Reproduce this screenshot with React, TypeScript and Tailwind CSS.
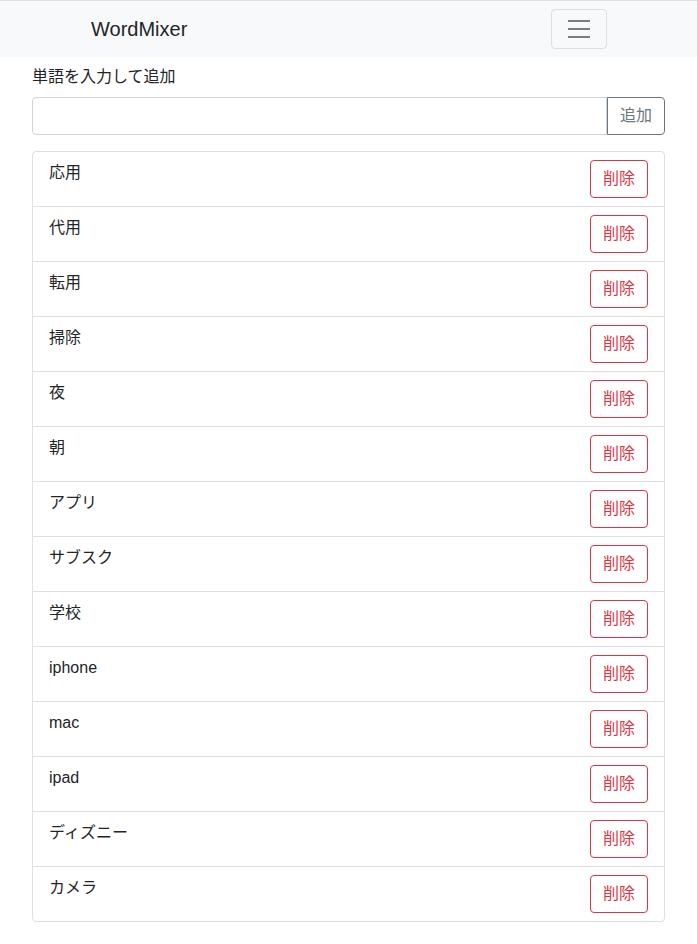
import { useState } from "react";

const initialWords = [
  "応用",
  "代用",
  "転用",
  "掃除",
  "夜",
  "朝",
  "アプリ",
  "サブスク",
  "学校",
  "iphone",
  "mac",
  "ipad",
  "ディズニー",
  "カメラ",
];

export default function App() {
  const [words, setWords] = useState(initialWords);
  const [text, setText] = useState("");

  const addWord = () => {
    if (!text.trim()) return;
    setWords([...words, text.trim()]);
    setText("");
  };

  const removeWord = (i: number) => {
    setWords(words.filter((_, idx) => idx !== i));
  };

  return (
    <div className="min-h-screen bg-white text-[#212529] font-['Liberation_Sans','Noto_Sans_CJK_JP',sans-serif] text-base leading-6">
      <nav className="border-t border-[#dee2e6] bg-[#f8f9fa]">
        <div className="flex items-center justify-between h-[56px] pl-[91px] pr-[90px]">
          <span className="text-[20px] leading-[30px]">WordMixer</span>
          <button className="w-[56px] h-[40px] flex items-center justify-center border border-[rgba(0,0,0,0.1)] rounded-[4px]">
            <svg width="30" height="30" viewBox="0 0 30 30">
              <path
                d="M4 7h22M4 15h22M4 23h22"
                stroke="rgba(0,0,0,0.5)"
                strokeWidth="2"
                strokeLinecap="butt"
              />
            </svg>
          </button>
        </div>
      </nav>

      <div className="px-[32px]">
        <label className="block mt-2 mb-2">単語を入力して追加</label>
        <div className="flex">
          <input
            value={text}
            onChange={(e) => setText(e.target.value)}
            className="flex-1 h-[38px] px-3 border border-[#ced4da] rounded-l-[4px] outline-none"
          />
          <button
            onClick={addWord}
            className="h-[38px] px-3 border border-[#6c757d] text-[#6c757d] rounded-r-[4px]"
          >
            追加
          </button>
        </div>

        <ul className="mt-4 border border-[rgba(0,0,0,0.125)] rounded-[4px]">
          {words.map((w, i) => (
            <li
              key={i}
              className={`flex items-start justify-between px-4 py-2 ${
                i > 0 ? "border-t border-[rgba(0,0,0,0.125)]" : ""
              }`}
            >
              <span className="pt-[1px]">{w}</span>
              <button
                onClick={() => removeWord(i)}
                className="h-[38px] px-3 border border-[#dc3545] text-[#dc3545] rounded-[4px]"
              >
                削除
              </button>
            </li>
          ))}
        </ul>
      </div>
    </div>
  );
}
